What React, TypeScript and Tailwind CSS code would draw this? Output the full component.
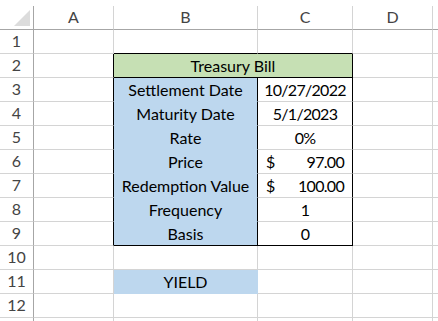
import React from "react";

type Cell = {
  text?: React.ReactNode;
  cls: string;
  w: string;
};

const colW = ["w-[80px]", "w-[144px]", "w-[95px]", "w-[80px]"];

// plain white cell with gridlines
const plain = "border-r-[#d4d4d4] border-b-[#d4d4d4]";

const Acct = ({ value }: { value: string }) => (
  <span className="flex w-full justify-between px-[8px]">
    <span>$</span>
    <span>{value}</span>
  </span>
);

const labelRows: { label: string; value: React.ReactNode }[] = [
  { label: "Settlement Date", value: "10/27/2022" },
  { label: "Maturity Date", value: "5/1/2023" },
  { label: "Rate", value: "0%" },
  { label: "Price", value: <Acct value="97.00" /> },
  { label: "Redemption Value", value: <Acct value="100.00" /> },
  { label: "Frequency", value: "1" },
  { label: "Basis", value: "0" },
];

function buildRows(): Cell[][] {
  const rows: Cell[][] = [];
  // row 1
  rows.push([
    { cls: plain, w: colW[0] },
    { cls: "border-r-[#d4d4d4] border-b-black", w: colW[1] },
    { cls: "border-r-[#d4d4d4] border-b-black", w: colW[2] },
    { cls: plain, w: colW[3] },
  ]);
  // row 2 - merged title
  rows.push([
    { cls: "border-r-black border-b-[#d4d4d4]", w: colW[0] },
    {
      cls: "bg-[#c6e0b4] border-r-black border-b-black",
      w: "w-[239px]",
      text: "Treasury Bill",
    },
    { cls: plain, w: colW[3] },
  ]);
  labelRows.forEach((r, i) => {
    const last = i === labelRows.length - 1;
    rows.push([
      { cls: "border-r-black border-b-[#d4d4d4]", w: colW[0] },
      {
        cls: last
          ? "bg-[#bdd7ee] border-r-black border-b-black"
          : "bg-[#bdd7ee] border-r-black border-b-[#bdd7ee]",
        w: colW[1],
        text: r.label,
      },
      {
        cls: last
          ? "border-r-black border-b-black tracking-[-0.7px]"
          : "border-r-black border-b-[#d4d4d4] tracking-[-0.7px]",
        w: colW[2],
        text: r.value,
      },
      { cls: plain, w: colW[3] },
    ]);
  });
  // row 10
  rows.push([
    { cls: plain, w: colW[0] },
    { cls: plain, w: colW[1] },
    { cls: plain, w: colW[2] },
    { cls: plain, w: colW[3] },
  ]);
  // row 11
  rows.push([
    { cls: plain, w: colW[0] },
    { cls: "bg-[#bdd7ee] border-r-[#bdd7ee] border-b-[#bdd7ee]", w: colW[1], text: "YIELD" },
    { cls: plain, w: colW[2] },
    { cls: plain, w: colW[3] },
  ]);
  // rows 12, 13
  for (let k = 0; k < 2; k++) {
    rows.push([
      { cls: plain, w: colW[0] },
      { cls: plain, w: colW[1] },
      { cls: plain, w: colW[2] },
      { cls: plain, w: colW[3] },
    ]);
  }
  return rows;
}

export default function App() {
  const rows = buildRows();

  return (
    <div className="h-[321px] w-[438px] overflow-hidden bg-white font-['Lato','Liberation_Sans',sans-serif] text-[16px] leading-none text-black">
      <div className="h-[6px]" />

      {/* column headers */}
      <div className="flex h-[24px] text-[#444]">
        <div className="flex w-[34px] shrink-0 items-end justify-end border-r border-b border-r-[#a6a6a6] border-b-[#a6a6a6] pr-[3px] pb-[3px]">
          <svg width="16" height="16" viewBox="0 0 16 16">
            <polygon points="16,0 16,16 0,16" fill="#dcdcdc" />
          </svg>
        </div>
        {["A", "B", "C", "D"].map((c, i) => (
          <div
            key={c}
            className={`${colW[i]} flex shrink-0 items-end justify-center border-r border-b border-r-[#d4d4d4] border-b-[#a6a6a6] pb-[4px]`}
          >
            {c}
          </div>
        ))}
        <div className="flex-1 border-b border-b-[#a6a6a6]" />
      </div>

      {rows.map((cells, ri) => (
        <div key={ri} className="flex h-[24px]">
          <div className="flex w-[34px] shrink-0 items-end justify-center border-r border-b border-r-[#a6a6a6] border-b-[#d4d4d4] pb-[4px] text-[#444]">
            {ri < 12 ? ri + 1 : ""}
          </div>
          {cells.map((c, ci) => (
            <div
              key={ci}
              className={`${c.w} ${c.cls} flex shrink-0 items-end justify-center border-r border-b pb-[3px] whitespace-nowrap`}
            >
              {c.text}
            </div>
          ))}
          <div className="flex-1 border-b border-b-[#d4d4d4]" />
        </div>
      ))}
    </div>
  );
}
